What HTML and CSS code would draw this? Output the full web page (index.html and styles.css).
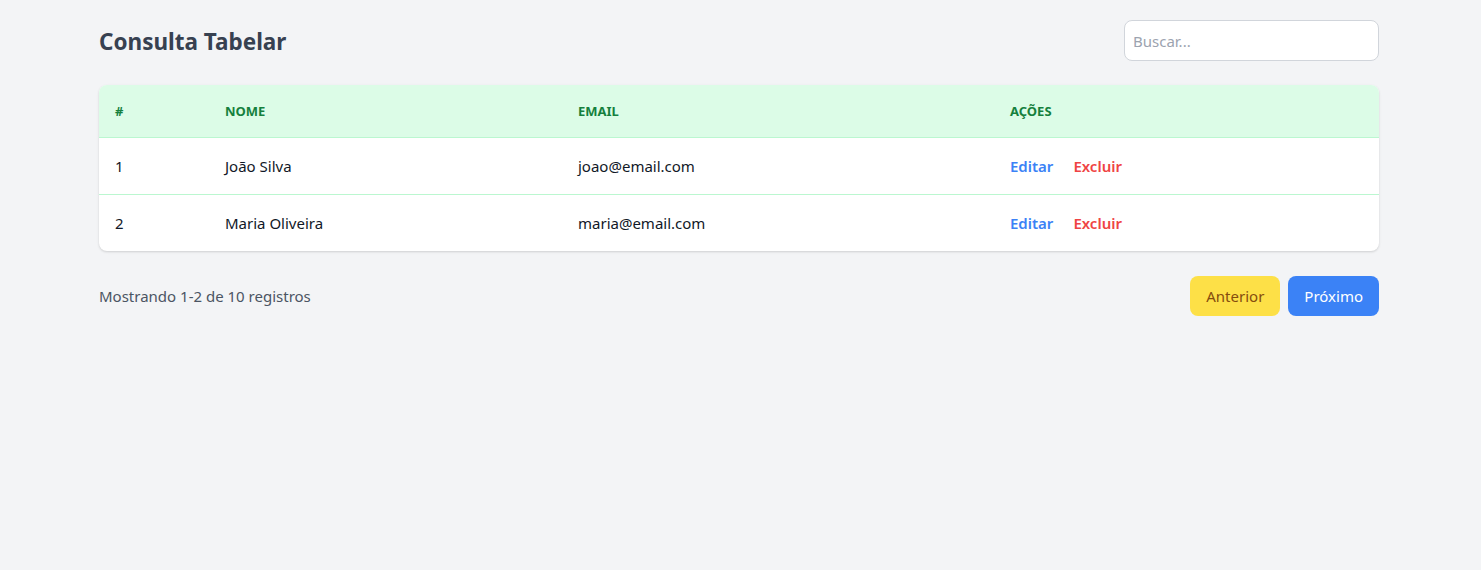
FILE: index.html
```html
<!DOCTYPE html>
<html lang="pt-BR">
<head>
<meta charset="utf-8">
<title>Consulta Tabelar</title>
<link rel="stylesheet" href="styles.css">
</head>
<body>
<div class="page">
  <div class="header">
    <h1 class="title">Consulta Tabelar</h1>
    <input class="search" type="text" placeholder="Buscar...">
  </div>
  <div class="card">
    <table class="table">
      <thead>
        <tr>
          <th class="c-id">#</th>
          <th class="c-name">Nome</th>
          <th class="c-email">Email</th>
          <th>Ações</th>
        </tr>
      </thead>
      <tbody>
        <tr>
          <td>1</td>
          <td>João Silva</td>
          <td>joao@email.com</td>
          <td><a class="act edit">Editar</a><a class="act del">Excluir</a></td>
        </tr>
        <tr>
          <td>2</td>
          <td>Maria Oliveira</td>
          <td>maria@email.com</td>
          <td><a class="act edit">Editar</a><a class="act del">Excluir</a></td>
        </tr>
      </tbody>
    </table>
  </div>
  <div class="footer">
    <span class="info">Mostrando 1-2 de 10 registros</span>
    <div class="pager">
      <button class="btn prev">Anterior</button>
      <button class="btn next">Próximo</button>
    </div>
  </div>
</div>
</body>
</html>
```
FILE: styles.css
```css
* { box-sizing: border-box; }
html, body { margin: 0; }
body {
  background: #f3f4f6;
  font-family: "Noto Sans", "Open Sans", sans-serif;
  font-size: 15px;
  line-height: 24px;
  color: #111827;
  padding-right: 3px;
}
.page {
  max-width: 1280px;
  margin: 0 auto;
  padding-top: 20px;
}
.header {
  display: flex;
  justify-content: space-between;
  align-items: center;
  margin-bottom: 24px;
}
.title {
  margin: 0;
  padding-top: 2px;
  font-size: 22.5px;
  line-height: 32px;
  font-weight: 700;
  color: #374151;
}
.search {
  width: 255px;
  height: 41px;
  padding: 0 8px;
  border: 1px solid #d1d5db;
  border-radius: 8px;
  font-family: inherit;
  font-size: 15px;
  background: #fff;
  outline: none;
}
.search::placeholder { color: #9ca3af; }
.card {
  background: #fff;
  border-radius: 8px;
  box-shadow: 0 1px 3px rgba(0,0,0,0.1), 0 1px 2px rgba(0,0,0,0.06);
  overflow: hidden;
}
.table {
  width: 100%;
  border-collapse: collapse;
}
.table th {
  background: #dcfce7;
  color: #15803d;
  font-size: 13px;
  line-height: 20px;
  font-weight: 700;
  text-transform: uppercase;
  text-align: left;
  padding: 16px;
}
.table tbody tr {
  border-top: 1px solid #bbf7d0;
}
.table td {
  padding: 16px;
  text-align: left;
}
.c-id { width: 110px; }
.c-name { width: 353px; }
.c-email { width: 432px; }
.act {
  font-weight: 600;
  cursor: pointer;
  margin-right: 20px;
}
.edit { color: #3b82f6; }
.del { color: #ef4444; }
.footer {
  display: flex;
  justify-content: space-between;
  align-items: center;
  margin-top: 25px;
}
.info { color: #4b5563; }
.pager { display: flex; gap: 8px; }
.btn {
  border: none;
  border-radius: 8px;
  padding: 8px 16px;
  font-family: inherit;
  font-size: 15px;
  line-height: 24px;
}
.prev { background: #fde047; color: #854d0e; }
.next { background: #3b82f6; color: #fff; }
```
